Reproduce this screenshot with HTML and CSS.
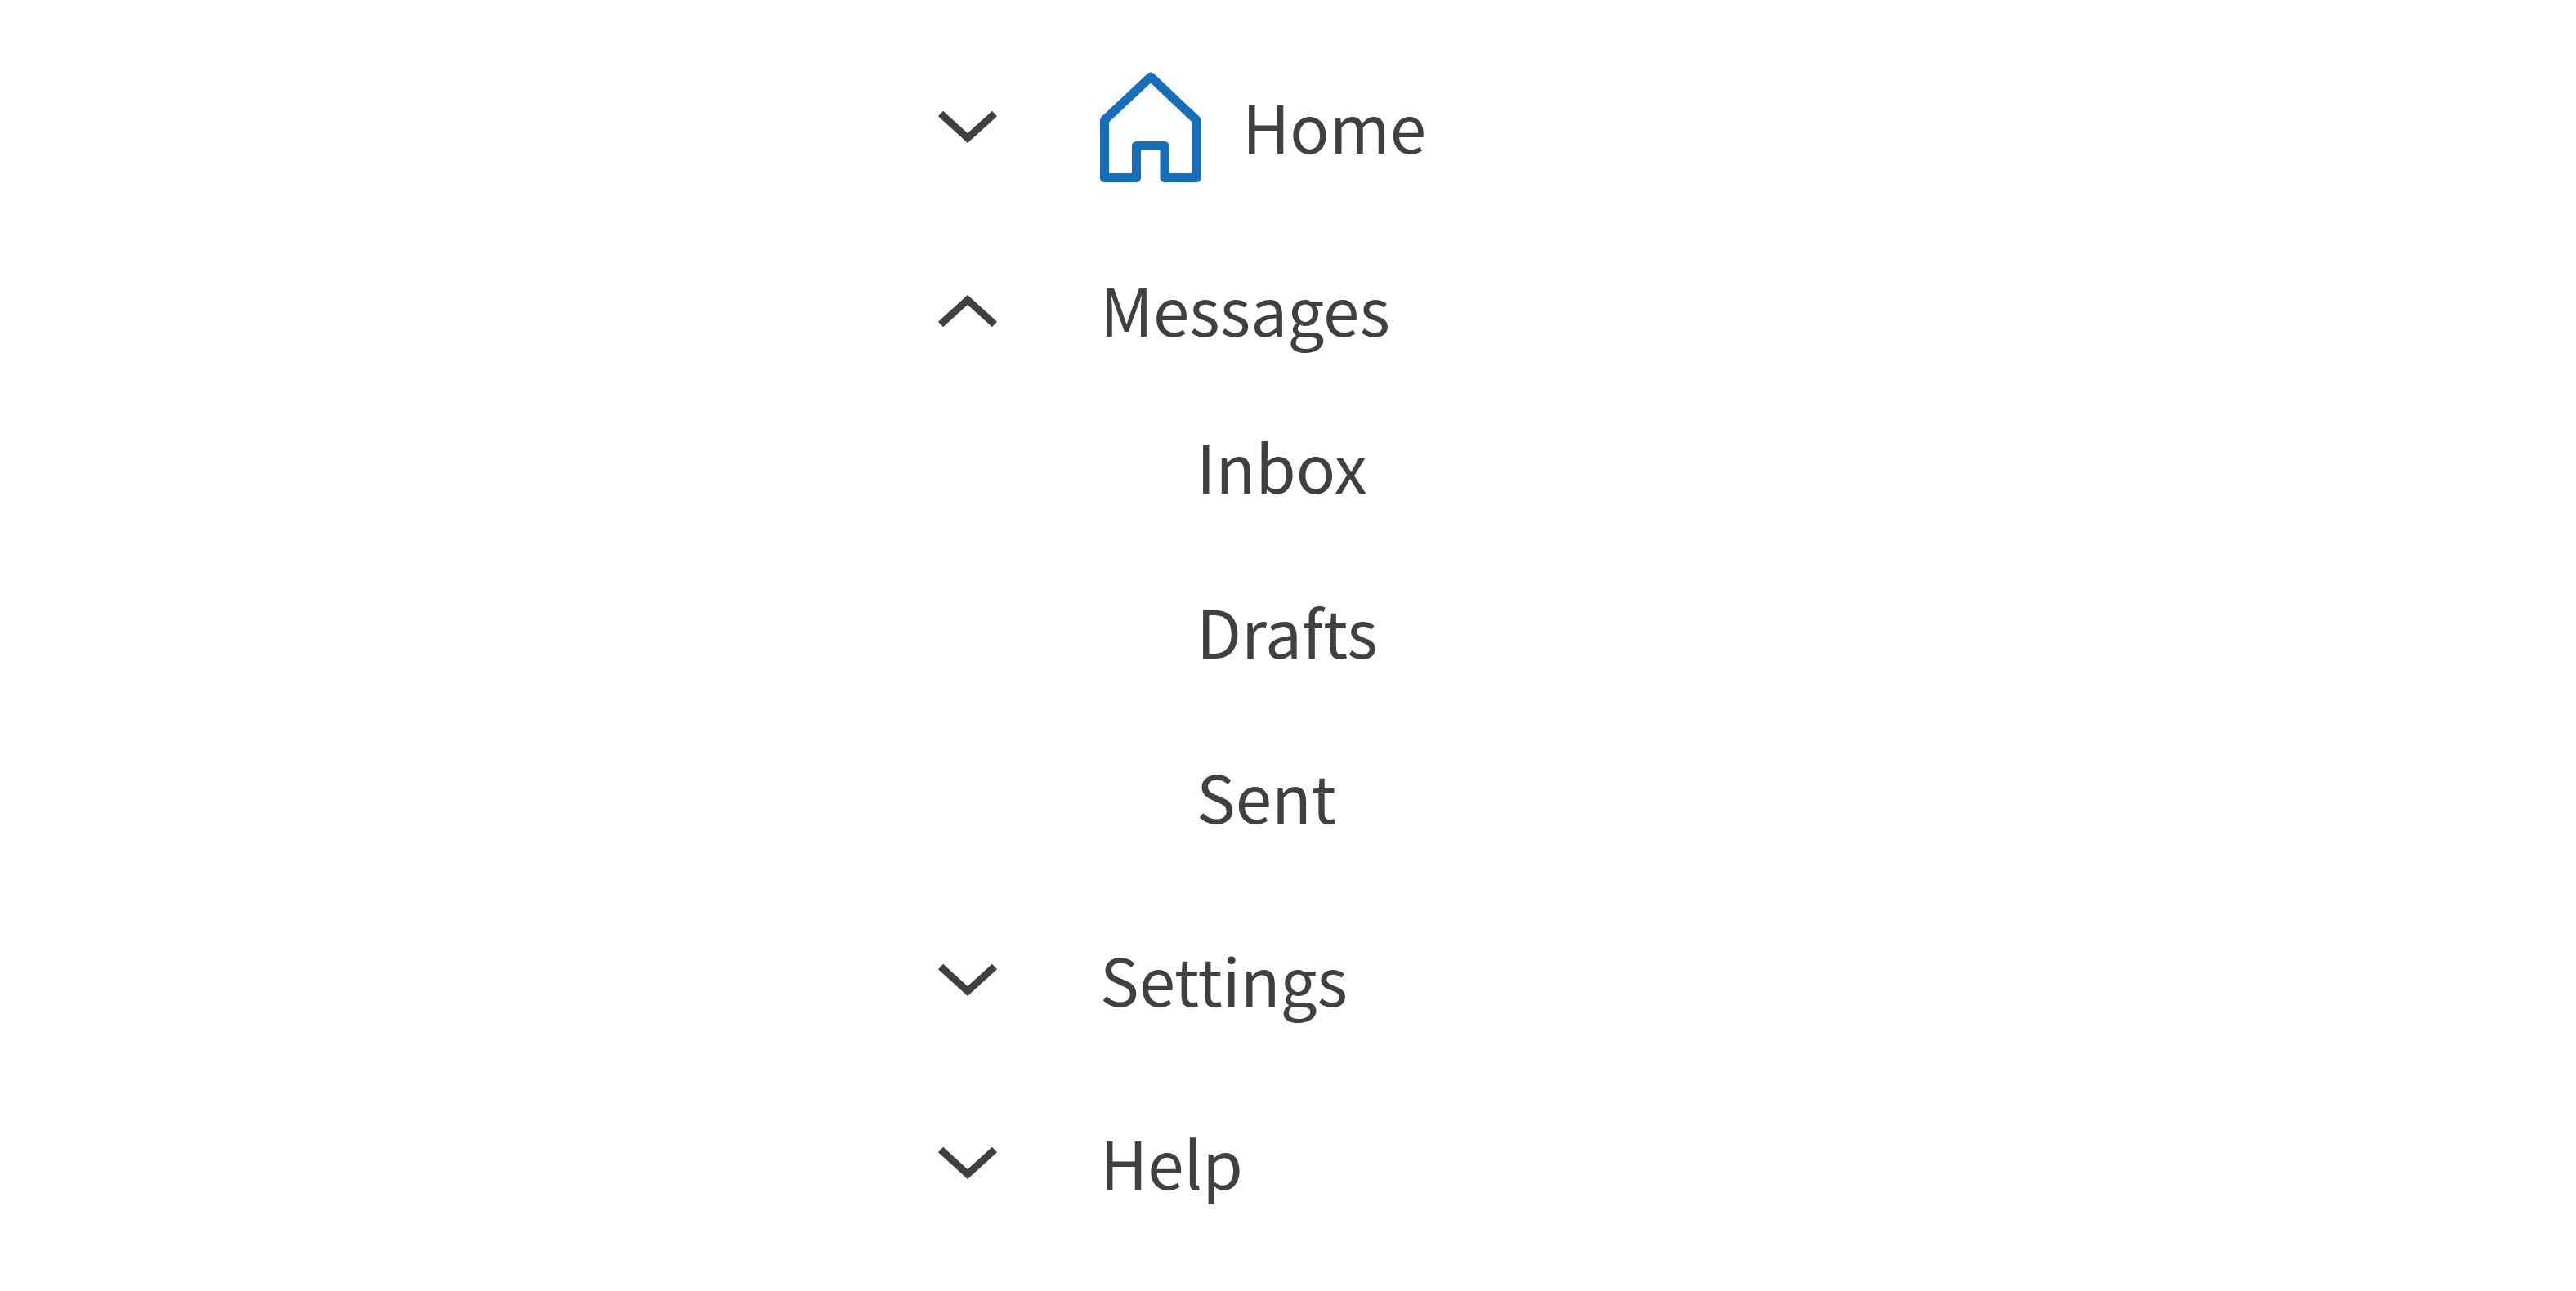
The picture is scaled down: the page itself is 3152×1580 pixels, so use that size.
FILE: index.html
```html
<!DOCTYPE html>
<html lang="en">
<head>
<meta charset="utf-8">
<meta name="viewport" content="width=device-width, initial-scale=1">
<title>Navigation</title>
<link rel="stylesheet" href="styles.css">
</head>
<body>
<nav class="tree" aria-label="Main">
<ul class="list">
<li class="item">
<button class="toggle" type="button" aria-expanded="false" aria-label="Expand Home"><svg class="chevron" viewBox="0 0 80 48"><path d="M7 7 40 37 73 7"/></svg></button>
<a class="link" href="#home"><svg class="home" viewBox="0 0 124 136" aria-hidden="true"><path d="M62 6 5.500 59V129.500H44.500V90.500H79V129.500H118V59Z"/></svg><span class="label">Home</span></a>
</li>
<li class="item">
<button class="toggle" type="button" aria-expanded="true" aria-label="Collapse Messages"><svg class="chevron" viewBox="0 0 80 48"><path d="M7 41 40 11 73 41"/></svg></button>
<a class="link" href="#messages"><span class="label">Messages</span></a>
</li>
<li>
<ul class="sublist">
<li><a class="link" href="#inbox"><span class="label">Inbox</span></a></li>
<li><a class="link" href="#drafts"><span class="label">Drafts</span></a></li>
<li><a class="link" href="#sent"><span class="label">Sent</span></a></li>
</ul>
</li>
<li class="item">
<button class="toggle" type="button" aria-expanded="false" aria-label="Expand Settings"><svg class="chevron" viewBox="0 0 80 48"><path d="M7 7 40 37 73 7"/></svg></button>
<a class="link" href="#settings"><span class="label">Settings</span></a>
</li>
<li class="item">
<button class="toggle" type="button" aria-expanded="false" aria-label="Expand Help"><svg class="chevron" viewBox="0 0 80 48"><path d="M7 7 40 37 73 7"/></svg></button>
<a class="link" href="#help"><span class="label">Help</span></a>
</li>
</ul>
</nav>
</body>
</html>
```
FILE: styles.css
```css
body {
  margin: 0;
  background: #fff;
  color: #404040;
  font: 80px/106px "Noto Sans CJK SC", sans-serif;
}
.tree {
  max-width: 864px;
  margin: 0 auto;
  padding: 44px 0 40px;
}
.list, .sublist {
  margin: 0;
  padding: 0;
  list-style: none;
}
.item {
  display: flex;
  align-items: center;
  gap: 122px;
  min-height: 224px;
}
.toggle {
  padding: 0;
  border: 0;
  background: none;
  color: inherit;
  cursor: pointer;
}
.chevron {
  display: block;
  width: 80px;
  height: 48px;
  fill: none;
  stroke: currentColor;
  stroke-width: 9;
}
.link {
  display: flex;
  align-items: center;
  gap: 50px;
  color: inherit;
  text-decoration: none;
}
.label {
  padding-bottom: 6px;
}
.home {
  width: 124px;
  height: 136px;
  fill: none;
  stroke: #146eb9;
  stroke-width: 11;
  stroke-linejoin: round;
}
.sublist {
  display: flex;
  flex-direction: column;
  gap: 90px;
  padding: 24px 0 56px 320px;
}
```
